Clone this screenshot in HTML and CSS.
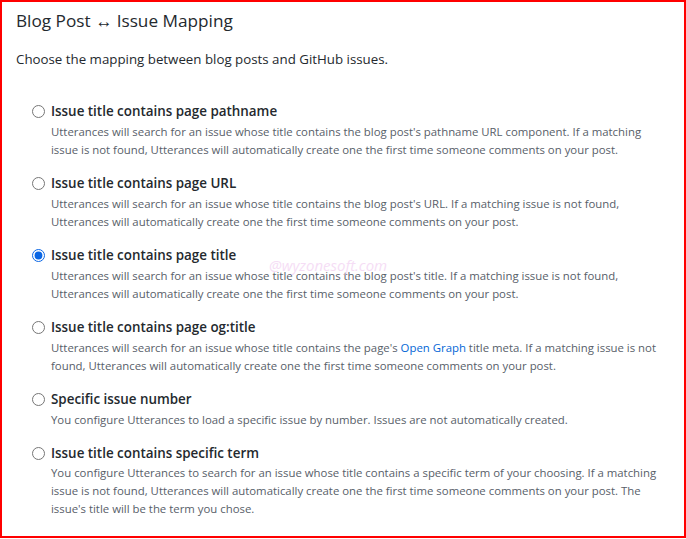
FILE: index.html
```html
<!DOCTYPE html>
<html>
<head>
<meta charset="utf-8">
<link rel="stylesheet" href="styles.css">
</head>
<body>
<div class="frame">
  <h3 class="title">Blog Post ↔ Issue Mapping</h3>
  <p class="lead">Choose the mapping between blog posts and GitHub issues.</p>
  <div class="options">
    <label class="option">
      <input type="radio" name="m" class="radio">
      <div class="body">
        <strong class="name">Issue title contains page pathname</strong>
        <p class="desc">Utterances will search for an issue whose title contains the blog post's pathname URL component. If a matching issue is not found, Utterances will automatically create one the first time someone comments on your post.</p>
      </div>
    </label>
    <label class="option">
      <input type="radio" name="m" class="radio">
      <div class="body">
        <strong class="name">Issue title contains page URL</strong>
        <p class="desc">Utterances will search for an issue whose title contains the blog post's URL. If a matching issue is not found,<br>Utterances will automatically create one the first time someone comments on your post.</p>
      </div>
    </label>
    <label class="option">
      <input type="radio" name="m" class="radio" checked>
      <div class="body">
        <strong class="name">Issue title contains page title</strong>
        <p class="desc">Utterances will search for an issue whose title contains the blog post's title. If a matching issue is not found,<br>Utterances will automatically create one the first time someone comments on your post.</p>
        <span class="watermark">@wyzonesoft.com</span>
      </div>
    </label>
    <label class="option">
      <input type="radio" name="m" class="radio">
      <div class="body">
        <strong class="name">Issue title contains page og:title</strong>
        <p class="desc">Utterances will search for an issue whose title contains the page's <a class="link">Open Graph</a> title meta. If a matching issue is not found, Utterances will automatically create one the first time someone comments on your post.</p>
      </div>
    </label>
    <label class="option">
      <input type="radio" name="m" class="radio">
      <div class="body">
        <strong class="name">Specific issue number</strong>
        <p class="desc">You configure Utterances to load a specific issue by number. Issues are not automatically created.</p>
      </div>
    </label>
    <label class="option">
      <input type="radio" name="m" class="radio">
      <div class="body">
        <strong class="name">Issue title contains specific term</strong>
        <p class="desc">You configure Utterances to search for an issue whose title contains a specific term of your choosing. If a matching issue is not found, Utterances will automatically create one the first time someone comments on your post. The issue's title will be the term you chose.</p>
      </div>
    </label>
  </div>
</div>
</body>
</html>
```

FILE: styles.css
```css
html, body {
  margin: 0;
  padding: 0;
  background: #ffffff;
}
body {
  font-family: "Open Sans", "Noto Sans", sans-serif;
  color: #24292e;
}
.frame {
  box-sizing: border-box;
  width: 686px;
  height: 538px;
  border: 2px solid #ff0000;
  padding: 7px 14px 0 14px;
  overflow: hidden;
}
.title {
  margin: 0;
  font-size: 17.2px;
  font-weight: 400;
  line-height: 24px;
  color: #24292e;
}
.lead {
  margin: 16px 0 0 0;
  font-size: 13.3px;
  line-height: 20px;
  color: #24292e;
}
.options {
  margin-top: 32px;
  padding-left: 16px;
  display: flex;
  flex-direction: column;
  gap: 14px;
}
.option {
  display: flex;
  align-items: flex-start;
  gap: 6px;
}
.radio {
  margin: 4px 0 0 0;
  width: 13px;
  height: 13px;
  accent-color: #0a66e4;
  flex: none;
}
.body {
  position: relative;
  flex: 1;
}
.name {
  display: block;
  font-size: 13.4px;
  font-weight: 600;
  line-height: 20px;
  color: #24292e;
}
.desc {
  margin: 2px 0 0 0;
  font-size: 11.38px;
  line-height: 18px;
  color: #586069;
}
.option:last-child .desc {
  margin-top: 1px;
}
.link {
  color: #0366d6;
  text-decoration: none;
}
.watermark {
  position: absolute;
  left: 218px;
  top: 10px;
  font-size: 15px;
  font-style: italic;
  color: #f0c8f0;
  opacity: 0.6;
  pointer-events: none;
}
```
